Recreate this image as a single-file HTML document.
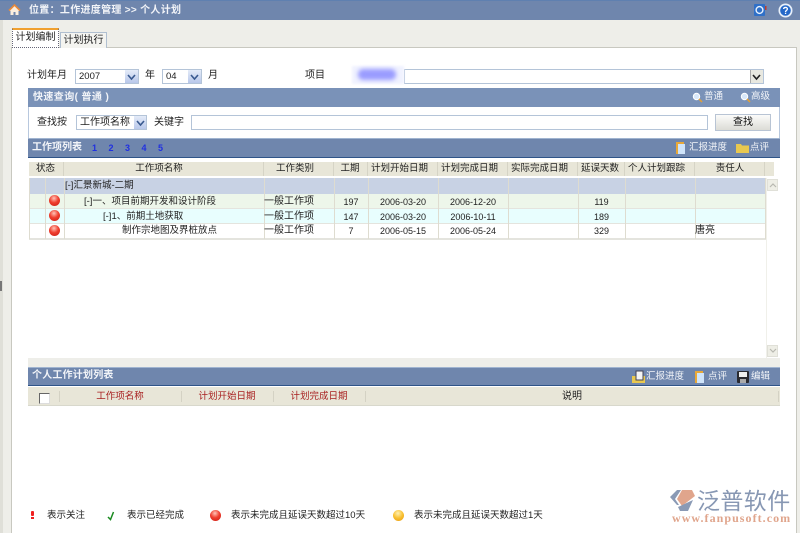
<!DOCTYPE html>
<html><head><meta charset="utf-8"><style>
html,body{margin:0;padding:0}
body{width:800px;height:533px;overflow:hidden;background:#eeeee9;position:relative;font:10px/14px "Liberation Sans","Noto Sans CJK SC",sans-serif;color:#222;filter:blur(.3px)}
div,span.a{position:absolute;white-space:nowrap}
.t{height:14px;line-height:14px}
.s{font-size:9.5px}
.w{color:#f2f4f8}
.c{text-align:center}
.sel{background:#fff;border:1px solid #b4c4d8;box-sizing:border-box;height:15px}
.arr{position:absolute;right:0;top:0;bottom:0;width:12px;background:linear-gradient(#e4ebf8,#b9c8ea)}
.arr svg{position:absolute;left:2px;top:3px}
.col{position:absolute;width:1px;background:#dedcd0}
.hc{position:absolute;width:1px;top:162px;height:14px;background:#d6d4c6}
.ball{position:absolute;width:11px;height:11px;border-radius:50%;background:radial-gradient(circle at 45% 30%,#ffc4b8 0,#f04030 45%,#c81810 100%)}
.row{left:29px;width:737px;position:absolute}
</style></head><body>
<div style="left:0;top:0;width:800px;height:20px;background:#6f86ad;border-top:1px solid #5f80b0;box-sizing:border-box"></div>
<div style="left:0;top:20px;width:3px;height:513px;background:#dfdfd8"></div>
<div style="left:0;top:281px;width:2px;height:10px;background:#777"></div>
<svg style="position:absolute;left:8px;top:4px" width="13" height="12" viewBox="0 0 13 12"><path d="M1 6.5 6.5 1 12 6.5 10.5 7V11H7.5V8H5.5V11H2.5V7Z" fill="#fbeede"/><path d="M1 6.5 6.5 1 12 6.5" fill="none" stroke="#e8893a" stroke-width="1.6"/></svg>
<div class="t w" style="left:29px;top:3px;font-weight:bold;letter-spacing:.3px;line-height:15px">位置：工作进度管理 &gt;&gt; 个人计划</div>
<svg style="position:absolute;left:753px;top:3px" width="14" height="14" viewBox="0 0 14 14"><rect x="1" y="1" width="11" height="12" rx="1" fill="#2f70c8"/><circle cx="6.5" cy="7" r="3.4" fill="none" stroke="#e8f2ff" stroke-width="1.4"/><rect x="12" y="3" width="1.5" height="4" fill="#c0392b"/></svg>
<svg style="position:absolute;left:778px;top:3px" width="15" height="15" viewBox="0 0 15 15"><circle cx="7.5" cy="7.5" r="7" fill="#e8f0fa"/><circle cx="7.5" cy="7.5" r="5.3" fill="#2468c8"/><path d="M5.6 6C5.8 3.8 9.5 4 9.4 6 9.3 7.4 7.5 7.4 7.5 9" fill="none" stroke="#fff" stroke-width="1.3"/><rect x="6.9" y="9.7" width="1.3" height="1.3" fill="#fff"/></svg>

<!-- panel -->
<div style="left:11px;top:47px;width:786px;height:486px;background:#fff;border:1px solid #c8c8c0;border-bottom:0;box-sizing:border-box"></div>
<!-- tabs -->
<div style="left:60px;top:32px;width:47px;height:16px;background:#f4f4f0;border:1px solid #b0bfd0;border-bottom:0;box-sizing:border-box;text-align:center;line-height:15px">计划执行</div>
<div style="left:12px;top:28px;width:47px;height:20px;background:#fff;border:1px dotted #667;border-top:2px solid #f0a030;box-sizing:border-box;text-align:center;line-height:15px">计划编制</div>

<!-- filter row -->
<div class="t" style="left:27px;top:69px">计划年月</div>
<div class="sel" style="left:75px;top:69px;width:64px;height:15px;padding-left:3px;line-height:13px;font-size:9.5px">2007<span class="arr" style="width:13px"><svg width="9" height="8"><path d="M1 2 4.5 6 8 2" fill="none" stroke="#3a5a90" stroke-width="1.6"/></svg></span></div>
<div class="t" style="left:145px;top:69px">年</div>
<div class="sel" style="left:162px;top:69px;width:40px;height:15px;padding-left:3px;line-height:13px;font-size:9.5px">04<span class="arr" style="width:13px"><svg width="9" height="8"><path d="M1 2 4.5 6 8 2" fill="none" stroke="#3a5a90" stroke-width="1.6"/></svg></span></div>
<div class="t" style="left:208px;top:69px">月</div>
<div class="t" style="left:305px;top:69px">项目</div>
<div class="sel" style="left:404px;top:69px;width:360px;height:15px"><span style="position:absolute;right:0;top:0;width:13px;height:13px;background:#e8e8e0;border-left:1px solid #aaa;box-sizing:border-box"><svg style="position:absolute;left:1px;top:3px" width="9" height="8"><path d="M1 2 4.5 6 8 2" fill="none" stroke="#222" stroke-width="1.6"/></svg></span></div>
<div style="left:352px;top:66px;width:52px;height:18px;background:#f0f2ff;filter:blur(1px)"></div>
<div style="left:358px;top:69px;width:38px;height:11px;background:#9a9cff;border-radius:5px;filter:blur(2px)"></div>

<!-- query -->
<div style="left:28px;top:88px;width:752px;height:19px;background:#7a92b8"></div>
<div class="t w" style="left:33px;top:91px;font-weight:bold;letter-spacing:.4px">快速查询( 普通 )</div>
<svg style="position:absolute;left:692px;top:92px" width="12" height="11"><circle cx="4.5" cy="4.5" r="3.2" fill="#d8e8fa" stroke="#fff"/><path d="M7 7 10 10" stroke="#e8a030" stroke-width="1.5"/></svg>
<div class="t w s" style="left:704px;top:90px">普通</div>
<svg style="position:absolute;left:740px;top:92px" width="12" height="11"><circle cx="4.5" cy="4.5" r="3.2" fill="#d8e8fa" stroke="#fff"/><path d="M7 7 10 10" stroke="#e8a030" stroke-width="1.5"/></svg>
<div class="t w s" style="left:751px;top:90px">高级</div>
<div style="left:28px;top:107px;width:752px;height:31px;box-sizing:border-box;border-left:1px solid #b8c8de;border-right:1px solid #b8c8de"></div>
<div class="t" style="left:37px;top:116px">查找按</div>
<div class="sel" style="left:76px;top:115px;width:71px;height:15px;padding-left:3px;line-height:13px;font-size:10px">工作项名称<span class="arr" style="width:12px"><svg width="9" height="8"><path d="M1 2 4.5 6 8 2" fill="none" stroke="#3a5a90" stroke-width="1.6"/></svg></span></div>
<div class="t" style="left:154px;top:116px">关键字</div>
<div class="sel" style="left:191px;top:115px;width:517px;height:15px"></div>
<div style="left:715px;top:114px;width:56px;height:17px;box-sizing:border-box;border:1px solid #b8c4d4;background:linear-gradient(#fbfbfa,#dcdcd6);text-align:center;line-height:15px;color:#111">查找</div>

<!-- list bar -->
<div style="left:28px;top:138px;width:752px;height:20px;background:#6f86ad;border-bottom:1px solid #2f5488;border-top:1px solid #a0b4d0;box-sizing:border-box"></div>
<div class="t w" style="left:32px;top:141px;font-weight:bold">工作项列表</div>
<div class="t" style="left:92px;top:141px;color:#2030e0;font-weight:bold;font-size:9px;word-spacing:9px">1 2 3 4 5</div>
<svg style="position:absolute;left:675px;top:141px" width="11" height="14"><rect x="1" y="1" width="8" height="12" fill="#e8a838"/><rect x="3" y="3" width="7" height="10" fill="#cfe4fa"/></svg>
<div class="t w s" style="left:689px;top:141px">汇报进度</div>
<svg style="position:absolute;left:736px;top:142px" width="14" height="12"><path d="M0 2H5L6 3.5H13V11H0Z" fill="#e8c850"/></svg>
<div class="t w s" style="left:750px;top:141px">点评</div>

<!-- table header -->
<div style="left:29px;top:162px;width:745px;height:14px;background:#e8e6d8"></div>
<div class="hc" style="left:63px"></div>
<div class="hc" style="left:263px"></div>
<div class="hc" style="left:333px"></div>
<div class="hc" style="left:367px"></div>
<div class="hc" style="left:437px"></div>
<div class="hc" style="left:507px"></div>
<div class="hc" style="left:577px"></div>
<div class="hc" style="left:624px"></div>
<div class="hc" style="left:694px"></div>
<div class="hc" style="left:764px"></div>
<div class="t c s" style="left:29px;top:161px;width:33px;line-height:14px;padding-top:1px">状态</div>
<div class="t c s" style="left:64px;top:161px;width:190px;padding-top:1px">工作项名称</div>
<div class="t c s" style="left:264px;top:161px;width:62px;padding-top:1px">工作类别</div>
<div class="t c s" style="left:334px;top:161px;width:32px;padding-top:1px">工期</div>
<div class="t s" style="left:371px;top:161px;padding-top:1px">计划开始日期</div>
<div class="t s" style="left:441px;top:161px;padding-top:1px">计划完成日期</div>
<div class="t s" style="left:511px;top:161px;padding-top:1px">实际完成日期</div>
<div class="t s" style="left:581px;top:161px;padding-top:1px">延误天数</div>
<div class="t s" style="left:628px;top:161px;padding-top:1px">个人计划跟踪</div>
<div class="t c s" style="left:695px;top:161px;width:70px;padding-top:1px">责任人</div>

<!-- rows -->
<div class="row" style="top:178px;height:16px;background:#c8d2e4"></div>
<div class="row" style="top:194px;height:15px;background:#edf6ea"></div>
<div class="row" style="top:209px;height:15px;background:#e8fefe"></div>
<div class="row" style="top:224px;height:15px;background:#fff"></div>
<div class="row" style="top:208px;height:1px;background:#e4e4de"></div>
<div class="row" style="top:223px;height:1px;background:#e4e4de"></div>
<div class="row" style="top:238px;height:2px;background:#e4e4de"></div>
<div class="col" style="left:29px;top:178px;height:61px"></div>
<div class="col" style="left:45px;top:178px;height:61px"></div>
<div class="col" style="left:64px;top:178px;height:61px"></div>
<div class="col" style="left:264px;top:178px;height:61px"></div>
<div class="col" style="left:334px;top:178px;height:61px"></div>
<div class="col" style="left:368px;top:178px;height:61px"></div>
<div class="col" style="left:438px;top:178px;height:61px"></div>
<div class="col" style="left:508px;top:178px;height:61px"></div>
<div class="col" style="left:578px;top:178px;height:61px"></div>
<div class="col" style="left:625px;top:178px;height:61px"></div>
<div class="col" style="left:695px;top:178px;height:61px"></div>
<div class="col" style="left:765px;top:178px;height:61px"></div>
<div class="ball" style="left:49px;top:195px"></div>
<div class="ball" style="left:49px;top:210px"></div>
<div class="ball" style="left:49px;top:225px"></div>

<div class="t s" style="left:65px;top:179px">[-]汇景新城-二期</div>

<div class="t s" style="left:84px;top:195px">[-]一、项目前期开发和设计阶段</div>
<div class="t" style="left:264px;top:195px">一般工作项</div>
<div class="t c" style="left:334px;top:195px;width:34px;font-size:9px">197</div>
<div class="t c" style="left:368px;top:195px;width:70px;font-size:9px">2006-03-20</div>
<div class="t c" style="left:438px;top:195px;width:70px;font-size:9px">2006-12-20</div>
<div class="t c" style="left:578px;top:195px;width:47px;font-size:9px">119</div>

<div class="t s" style="left:103px;top:210px">[-]1、前期土地获取</div>
<div class="t" style="left:264px;top:210px">一般工作项</div>
<div class="t c" style="left:334px;top:210px;width:34px;font-size:9px">147</div>
<div class="t c" style="left:368px;top:210px;width:70px;font-size:9px">2006-03-20</div>
<div class="t c" style="left:438px;top:210px;width:70px;font-size:9px">2006-10-11</div>
<div class="t c" style="left:578px;top:210px;width:47px;font-size:9px">189</div>

<div class="t s" style="left:122px;top:224px">制作宗地图及界桩放点</div>
<div class="t" style="left:264px;top:224px">一般工作项</div>
<div class="t c" style="left:334px;top:224px;width:34px;font-size:9px">7</div>
<div class="t c" style="left:368px;top:224px;width:70px;font-size:9px">2006-05-15</div>
<div class="t c" style="left:438px;top:224px;width:70px;font-size:9px">2006-05-24</div>
<div class="t c" style="left:578px;top:224px;width:47px;font-size:9px">329</div>
<div class="t" style="left:695px;top:224px">唐亮</div>

<!-- scrollbar -->
<div style="left:766px;top:178px;width:13px;height:180px;background:#fff;border-left:1px solid #f0f0ea;box-sizing:border-box"></div>
<div style="left:767px;top:179px;width:11px;height:12px;background:#eeeee6;border:1px solid #e0e0d8;box-sizing:border-box"><svg style="position:absolute;left:1px;top:2px" width="8" height="6"><path d="M1 5 4 2 7 5" fill="none" stroke="#b8b8b0" stroke-width="1.2"/></svg></div>
<div style="left:767px;top:345px;width:11px;height:12px;background:#eeeee6;border:1px solid #e0e0d8;box-sizing:border-box"><svg style="position:absolute;left:1px;top:2px" width="8" height="6"><path d="M1 1 4 4 7 1" fill="none" stroke="#b8b8b0" stroke-width="1.2"/></svg></div>

<!-- personal section -->
<div style="left:28px;top:358px;width:752px;height:9px;background:#eeeee9"></div>
<div style="left:28px;top:367px;width:752px;height:19px;background:#6f86ad;border-bottom:1px solid #2f5488;border-top:1px solid #a0b4d0;box-sizing:border-box"></div>
<div class="t w" style="left:32px;top:369px;font-weight:bold;letter-spacing:.2px">个人工作计划列表</div>
<svg style="position:absolute;left:632px;top:370px" width="14" height="13"><rect x="0" y="6" width="13" height="7" fill="#e8c850"/><rect x="4" y="1" width="7" height="9" fill="#f4f4f4" stroke="#445"/></svg>
<div class="t w s" style="left:646px;top:370px">汇报进度</div>
<svg style="position:absolute;left:694px;top:370px" width="11" height="14"><rect x="1" y="1" width="8" height="12" fill="#e8a838"/><rect x="3" y="3" width="7" height="10" fill="#cfe4fa"/></svg>
<div class="t w s" style="left:708px;top:370px">点评</div>
<svg style="position:absolute;left:737px;top:371px" width="12" height="12"><rect width="12" height="12" rx="1" fill="#2a2a30"/><rect x="2" y="1" width="8" height="5" fill="#f0f0f0"/><rect x="3" y="8" width="6" height="4" fill="#aaa"/></svg>
<div class="t w s" style="left:751px;top:370px">编辑</div>

<div style="left:28px;top:387px;width:752px;height:19px;background:#e8e6d8;border-bottom:1px solid #d8d8cc;box-sizing:border-box"></div>
<div style="left:39px;top:393px;width:9px;height:9px;background:#fff;border:1px solid #666;border-right-color:#ddd;border-bottom-color:#ddd"></div>
<div class="col" style="left:59px;top:391px;height:11px;background:#d4d2c4"></div>
<div class="col" style="left:181px;top:391px;height:11px;background:#d4d2c4"></div>
<div class="col" style="left:273px;top:391px;height:11px;background:#d4d2c4"></div>
<div class="col" style="left:365px;top:391px;height:11px;background:#d4d2c4"></div>
<div class="col" style="left:778px;top:391px;height:11px;background:#d4d2c4"></div>
<div class="t c s" style="left:60px;top:390px;width:120px;color:#a82020">工作项名称</div>
<div class="t c s" style="left:182px;top:390px;width:90px;color:#a82020">计划开始日期</div>
<div class="t c s" style="left:274px;top:390px;width:90px;color:#a82020">计划完成日期</div>
<div class="t c" style="left:366px;top:390px;width:412px">说明</div>

<!-- legend -->
<div style="left:31px;top:511px;width:3px;height:5px;background:#f02020;border-radius:1px"></div>
<div style="left:31px;top:517px;width:3px;height:2px;background:#f02020"></div>
<div class="t s" style="left:47px;top:509px">表示关注</div>
<svg style="position:absolute;left:107px;top:511px" width="9" height="10"><path d="M1 6 3.5 8.5 6.5 1" fill="none" stroke="#1a8a20" stroke-width="1.5"/></svg>
<div class="t s" style="left:127px;top:509px">表示已经完成</div>
<div class="ball" style="left:210px;top:510px"></div>
<div class="t s" style="left:231px;top:509px">表示未完成且延误天数超过10天</div>
<div style="left:393px;top:510px;width:11px;height:11px;border-radius:50%;background:radial-gradient(circle at 45% 30%,#fff0b0 0,#f8c030 50%,#e89810 100%)"></div>
<div class="t s" style="left:414px;top:509px">表示未完成且延误天数超过1天</div>

<!-- logo -->
<svg style="position:absolute;left:669px;top:489px" width="28" height="24" viewBox="0 0 28 24"><path d="M8 1H12L6 10 10 16 8 16 1 8Z" fill="#8a9ab5"/><path d="M13 1H23L26 7 13 17 8 10Z" fill="#e0a58c"/><path d="M24 11 19 22H11L9 18Z" fill="#8a9ab5"/></svg>
<div style="left:697px;top:488px;font-size:23px;line-height:26px;color:#8797b3;letter-spacing:.4px">泛普软件</div>
<div style="left:672px;top:512px;font:bold 12px/13px 'Liberation Serif',serif;color:#e0a58c;letter-spacing:1.05px">www.fanpusoft.com</div>
</body></html>
